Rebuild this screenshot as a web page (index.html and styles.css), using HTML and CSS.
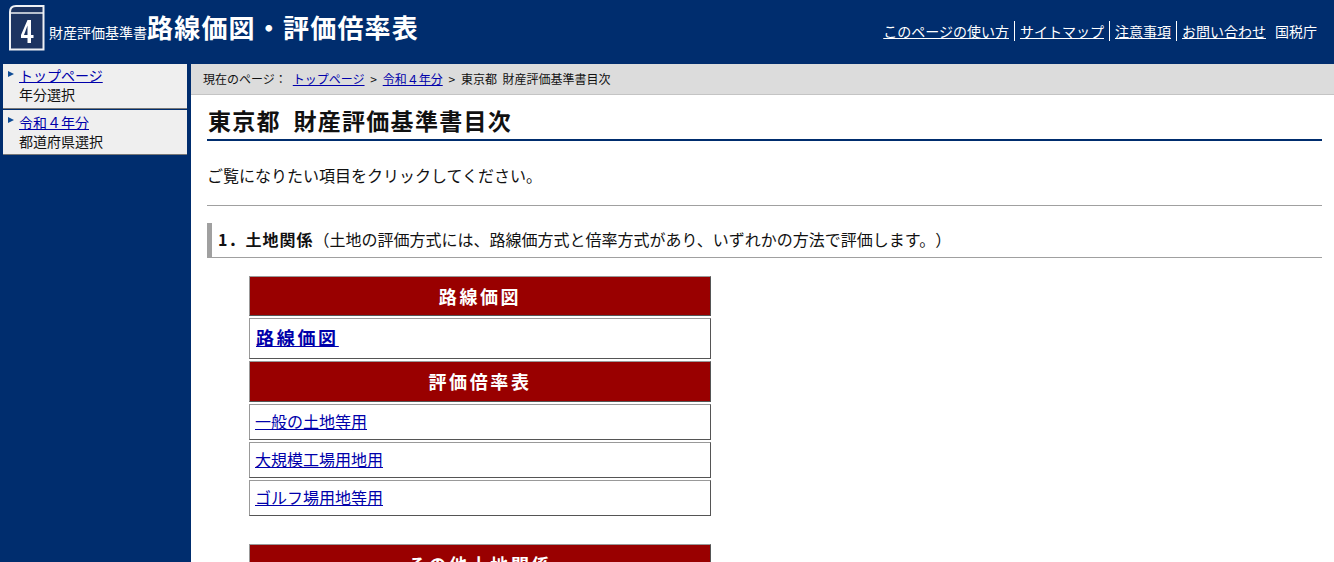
FILE: index.html
```html
<!DOCTYPE html>
<html lang="ja">
<head>
<meta charset="utf-8">
<title>路線価図・評価倍率表</title>
<link rel="stylesheet" href="styles.css">
</head>
<body>
<header class="site-header">
  <div class="brand">
    <svg class="logo" width="37" height="46" viewBox="0 0 37 46" aria-hidden="true">
      <path d="M2 44.500 V7 Q2 1 8 1 H35.500 V44.500 Z" fill="#1d3461" stroke="#eef0f4" stroke-width="2"/>
      <path d="M2 8 H35" fill="none" stroke="#eef0f4" stroke-width="1.500"/>
      <path d="M19.500 15 H23 V30 H25.500 V33 H23 V38 H19.500 V33 H13 V30 Z M19.500 20.500 L16 30 H19.500 Z" fill="#fff" fill-rule="evenodd"/>
    </svg>
    <span class="brand-sub">財産評価基準書</span>
    <span class="brand-title">路線価図・評価倍率表</span>
  </div>
  <nav class="top-nav">
    <a href="#">このページの使い方</a><i class="sep"></i><a href="#">サイトマップ</a><i class="sep"></i><a href="#">注意事項</a><i class="sep"></i><a href="#">お問い合わせ</a><span class="agency">国税庁</span>
  </nav>
</header>
<div class="layout">
  <aside class="side">
    <div class="side-item"><a href="#">トップページ</a><span>年分選択</span></div>
    <div class="side-item"><a href="#">令和４年分</a><span>都道府県選択</span></div>
  </aside>
  <main class="main">
    <div class="crumb">現在のページ：<a href="#" class="crumb-first">トップページ</a><b>&gt;</b><a href="#">令和４年分</a><b>&gt;</b>東京都 財産評価基準書目次</div>
    <div class="content">
      <h1>東京都 財産評価基準書目次</h1>
      <p class="lead">ご覧になりたい項目をクリックしてください。</p>
      <hr>
      <h2><strong>1．土地関係</strong>（土地の評価方式には、路線価方式と倍率方式があり、いずれかの方法で評価します。）</h2>
      <div class="cells">
        <div class="cell head short">路線価図</div>
        <div class="cell link big"><a href="#">路線価図</a></div>
        <div class="cell head tall">評価倍率表</div>
        <div class="cell link"><a href="#">一般の土地等用</a></div>
        <div class="cell link"><a href="#">大規模工場用地用</a></div>
        <div class="cell link"><a href="#">ゴルフ場用地等用</a></div>
      </div>
      <div class="cells second">
        <div class="cell head tall">その他土地関係</div>
      </div>
    </div>
  </main>
</div>
</body>
</html>
```
FILE: styles.css
```css
html, body {
  margin: 0;
  height: 562px;
  overflow: hidden;
  background: #002d6e;
}
body {
  font-family: "Noto Sans CJK JP", "Liberation Sans", sans-serif;
  color: #111;
  text-spacing-trim: space-all;
}
.site-header {
  height: 64px;
  display: flex;
  justify-content: space-between;
  color: #fff;
}
.brand {
  display: flex;
  align-items: flex-start;
  padding: 5px 0 0 8px;
}
.logo { display: block; }
.brand-sub {
  font-size: 14px;
  line-height: 20px;
  margin: 17px 0 0 4px;
}
.brand-title {
  font-size: 26px;
  line-height: 30px;
  font-weight: 700;
  margin: 7px 0 0 0;
  letter-spacing: 1.200px;
}
.top-nav {
  display: flex;
  align-items: center;
  height: 20px;
  margin-top: 21px;
  padding-right: 17px;
  font-size: 14px;
}
.top-nav a { color: #fff; }
.sep {
  width: 1px;
  height: 20px;
  background: #fff;
  margin: 0 5px;
}
.agency { margin-left: 9px; }
.layout { display: flex; height: 498px; }
.side {
  width: 191px;
  flex: none;
  padding: 0 4px 0 3px;
  box-sizing: border-box;
}
.side-item {
  box-sizing: border-box;
  height: 45px;
  padding: 3px 0 0 16px;
  margin-bottom: 1px;
  background: #efefef;
  border-bottom: 1px solid #777;
  font-size: 14px;
  line-height: 19px;
  position: relative;
}
.side-item:first-child { padding-top: 2px; }
.side-item::before {
  content: "";
  position: absolute;
  left: 5px;
  top: 7px;
  border-left: 6px solid #0f4c96;
  border-top: 3px solid transparent;
  border-bottom: 3px solid transparent;
}
.side-item a { color: #00a; display: block; }
.side-item span { display: block; }
.main {
  flex: 1;
  min-width: 0;
  background: #fff;
}
.crumb {
  height: 30px;
  background: #dcdcdc;
  border-bottom: 1px solid #c4c4c4;
  padding-left: 12px;
  font-size: 12px;
  line-height: 29px;
  white-space: nowrap;
  word-spacing: 3px;
}
.crumb a { color: #00a; }
.crumb-first { margin-left: 6px; }
.crumb b { font-weight: 400; margin: 0 5.750px; }
.content { padding: 0 12px 0 16px; }
h1 {
  margin: 0;
  padding-top: 10px;
  height: 34px;
  font-size: 23px;
  line-height: 30px;
  font-weight: 700;
  letter-spacing: 1.300px;
  word-spacing: 6px;
  border-bottom: 2px solid #002d6e;
  padding-left: 1px;
}
.lead {
  margin: 0;
  padding-top: 23px;
  font-size: 16px;
  line-height: 22px;
}
hr {
  margin: 19px 0 0;
  border: 0;
  border-top: 1px solid #a0a0a0;
  height: 0;
}
h2 {
  margin: 17px 0 0;
  height: 34px;
  font-size: 16px;
  font-weight: 400;
  line-height: 33px;
  border-left: 5px solid #a0a0a0;
  border-bottom: 1px solid #a0a0a0;
  padding-left: 6px;
  white-space: nowrap;
}
h2 strong { font-weight: 700; letter-spacing: 1px; }
.cells {
  width: 462px;
  margin: 18px 0 0 42px;
  display: flex;
  flex-direction: column;
  gap: 2px;
}
.cells.second { margin-top: 28px; }
.cell {
  box-sizing: border-box;
  border: 1px solid;
  border-color: #999 #555 #555 #999;
}
.head {
  background: #990000;
  color: #fff;
  text-align: center;
  font-weight: 700;
  font-size: 18px;
  letter-spacing: 2.600px;
}
.short { height: 40px; line-height: 38px; }
.tall { height: 41px; line-height: 38px; }
.link {
  height: 36px;
  padding-left: 5px;
  font-size: 16px;
  line-height: 32px;
}
.link a { color: #00a; }
.big { height: 41px; padding-left: 6px; line-height: 37px; font-size: 18px; font-weight: 700; letter-spacing: 2.700px; }
```
